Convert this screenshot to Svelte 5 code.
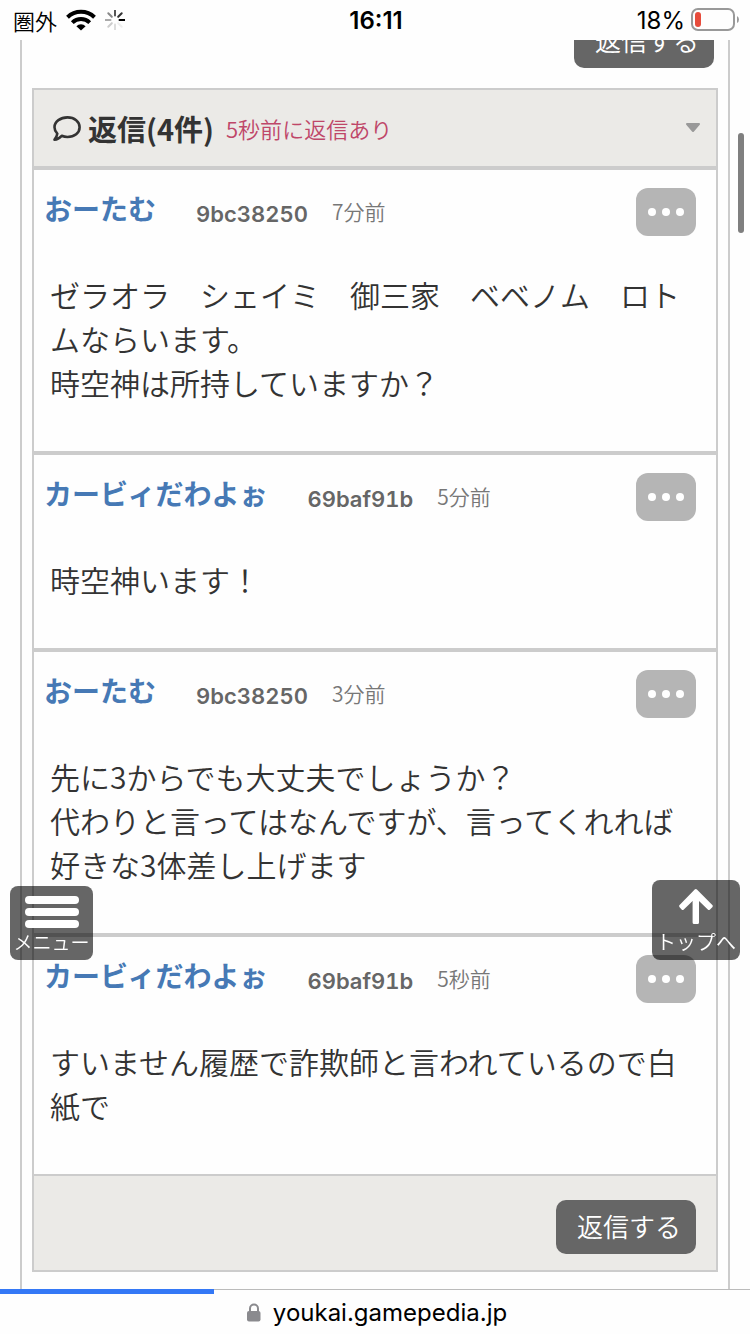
<script>
	let open = $state(true);

	const loaded = 28.5;

	const replies = [
		{
			name: "おーたむ",
			id: "9bc38250",
			time: "7分前",
			text: "ゼラオラ　シェイミ　御三家　ベベノム　ロトムならいます。\n時空神は所持していますか？",
		},
		{
			name: "カービィだわよぉ",
			id: "69baf91b",
			time: "5分前",
			text: "時空神います！",
		},
		{
			name: "おーたむ",
			id: "9bc38250",
			time: "3分前",
			text: "先に3からでも大丈夫でしょうか？\n代わりと言ってはなんですが、言ってくれれば好きな3体差し上げます",
		},
		{
			name: "カービィだわよぉ",
			id: "69baf91b",
			time: "5秒前",
			text: "すいません履歴で詐欺師と言われているので白紙で",
		},
	];

	// spinner spokes, clockwise from the top
	const spokes = ["#555", "#333", "#000", "#eee", "#ddd", "#ccc", "#aaa", "#888"];
</script>

<div class="status">
	<div class="carrier">
		<span>圏外</span>
		<svg class="wifi" viewBox="0 0 30 22" aria-hidden="true">
			<path d="M1.500 8.200a19.500 19.500 0 0 1 27 0" />
			<path d="M6.300 13.600a12.600 12.600 0 0 1 17.400 0" />
			<path class="dot" d="M15 21.500l-4.600-4.300a6.600 6.600 0 0 1 9.200 0z" />
		</svg>
		<svg class="spinner" viewBox="-10 -10 20 20" aria-hidden="true">
			{#each spokes as color, i}
				<path d="M0-4.500v-5" stroke={color} transform="rotate({i * 45})" />
			{/each}
		</svg>
	</div>
	<strong>16:11</strong>
	<div class="power">
		<span>18%</span>
		<svg class="battery" viewBox="0 0 48 24" aria-hidden="true">
			<rect class="case" x="1" y="1" width="42" height="21" rx="6" />
			<rect class="level" x="4" y="4" width="6" height="15" rx="3" />
			<path class="cap" d="M46 8q2 1 2 3.500t-2 3.500z" />
		</svg>
	</div>
</div>

<main>
	<div class="column">
		<div class="actions">
			<button class="reply-btn">返信する</button>
		</div>

		<section class="panel">
			<button class="head" aria-expanded={open} onclick={() => (open = !open)}>
				<svg class="bubble" viewBox="0 0 28 25" aria-hidden="true">
					<path
						d="M14.500 1.400C21.500 1.400 26.600 5.500 26.600 11.200S21.500 21 14.500 21c-2.200 0-4-.4-5.800-1.200C6.700 22 4.200 23.500 1.500 23.600c1.500-1.700 2.500-3.600 2.800-6C2.500 15.800 1.500 13.700 1.500 11.200 1.500 5.500 7.500 1.400 14.500 1.400z"
					/>
				</svg>
				<span class="title">返信(4件)</span>
				<span class="recent">5秒前に返信あり</span>
				<svg class="caret" viewBox="0 0 16 10" aria-hidden="true">
					<path d="M2 1h12L8 8z" />
				</svg>
			</button>

			{#if open}
				{#each replies as reply}
					<article>
						<header>
							<a href="#{reply.id}">{reply.name}</a>
							<span class="id">{reply.id}</span>
							<time>{reply.time}</time>
							<button class="more" aria-label="その他">
								<i></i><i></i><i></i>
							</button>
						</header>
						<p>{reply.text}</p>
					</article>
				{/each}
			{/if}

			<footer>
				<button class="reply-btn">返信する</button>
			</footer>
		</section>
	</div>
</main>

<div class="scroll-thumb"></div>

<button class="float menu">
	<svg viewBox="0 0 54 32" aria-hidden="true">
		<rect width="54" height="8" rx="4" />
		<rect y="12" width="54" height="8" rx="4" />
		<rect y="24" width="54" height="8" rx="4" />
	</svg>
	<span>メニュー</span>
</button>

<button class="float top">
	<svg viewBox="0 0 34 35" aria-hidden="true">
		<path
			d="M15.700.6q1.100-1 2.200 0L33.300 16q1 1.100 0 2.200L31 20.500q-1.100 1-2.200 0L20 12v21.500q0 1.500-1.500 1.500h-3.400q-1.500 0-1.500-1.500V12l-8.800 8.500q-1.100 1-2.200 0L.6 18.200q-1-1.100 0-2.200z"
		/>
	</svg>
	<span>トップへ</span>
</button>

<div class="browser">
	<div class="progress" style="width: {loaded}%"></div>
	<svg class="lock" viewBox="0 0 14 19" aria-hidden="true">
		<path d="M3 9V5.500a4 4 0 0 1 8 0V9" />
		<rect y="8" width="13.500" height="10.500" rx="2" />
	</svg>
	<span>youkai.gamepedia.jp</span>
</div>

<style>
	:global(body) {
		background: #fefefe;
		color: #333;
		font-family: "Noto Sans CJK JP", sans-serif;
		font-weight: 350;
	}

	button {
		border: 0;
		cursor: pointer;
		font-family: inherit;
		font-weight: inherit;
		margin: 0;
		padding: 0;
	}

	.status {
		align-items: center;
		background: #fefefe;
		box-sizing: border-box;
		color: #000;
		display: grid;
		font-family: Inter, "Noto Sans CJK JP", sans-serif;
		font-size: 24px;
		grid-template-columns: 1fr auto 1fr;
		height: 40px;
		left: 0;
		padding: 0 11px 0 13px;
		position: fixed;
		right: 0;
		top: 0;
		z-index: 2;
	}

	.status strong {
		font-weight: 600;
	}

	.carrier,
	.power {
		align-items: center;
		display: flex;
	}

	.carrier {
		font-size: 22px;
	}

	.power {
		font-weight: 400;
		gap: 6px;
		justify-content: flex-end;
	}

	.wifi {
		fill: none;
		height: 22px;
		margin: 0 9px;
		stroke: #000;
		stroke-width: 4;
		width: 30px;
	}

	.wifi .dot {
		fill: #000;
		stroke: none;
	}

	.spinner {
		height: 20px;
		stroke-linecap: round;
		stroke-width: 2;
		width: 20px;
	}

	.battery {
		height: 24px;
		width: 48px;
	}

	.case {
		fill: none;
		stroke: #999;
		stroke-width: 2;
	}

	.level {
		fill: #e74c3c;
	}

	.cap {
		fill: #999;
	}

	main {
		display: flex;
		flex-direction: column;
		min-height: 100vh;
		padding: 0 20px;
	}

	.column {
		border: solid #ccc;
		border-width: 0 2px;
		flex: 1;
		padding: 14px 10px 0;
	}

	.actions {
		display: flex;
		justify-content: flex-end;
		margin: 0 4px 20px;
	}

	.reply-btn {
		background: #666;
		border-radius: 10px;
		color: #fff;
		font-size: 26px;
		height: 54px;
		padding: 0 0 4px 6px;
		width: 140px;
	}

	.panel {
		border: 2px solid #ccc;
	}

	.head {
		align-items: center;
		background: #ebeae7;
		color: #333;
		display: flex;
		height: 76px;
		padding: 0 15px 0 19px;
		text-align: left;
		width: 100%;
	}

	.bubble {
		fill: none;
		height: 25px;
		stroke: #333;
		stroke-linejoin: round;
		stroke-width: 2.6;
		width: 28px;
	}

	.title {
		font-size: 29px;
		font-weight: bold;
		margin: 0 12px 0 7px;
	}

	.recent {
		color: #bf4769;
		font-size: 22px;
	}

	.caret {
		fill: #999;
		height: 10px;
		margin-left: auto;
		stroke: #999;
		stroke-linejoin: round;
		stroke-width: 2;
		width: 16px;
	}

	article {
		border-top: 4px solid #ccc;
		padding: 18px 16px 47px;
	}

	article header {
		display: flex;
		height: 48px;
		line-height: 46px;
		margin: 0 4px 36px -6px;
	}

	a {
		color: #4679b5;
		font-size: 28px;
		font-weight: bold;
		line-height: 40px;
		margin-right: 40px;
		text-decoration: none;
	}

	.id {
		color: #666;
		font-family: Inter, sans-serif;
		font-size: 22px;
		font-variant-numeric: tabular-nums;
		font-weight: 600;
		line-height: 52px;
		margin-right: 24px;
	}

	time {
		color: #777;
		font-size: 21px;
	}

	.more {
		align-items: center;
		background: #b5b5b5;
		border-radius: 12px;
		display: flex;
		gap: 6px;
		height: 48px;
		justify-content: center;
		margin-left: auto;
		width: 60px;
	}

	.more i {
		background: #fff;
		border-radius: 50%;
		height: 8px;
		width: 8px;
	}

	article p {
		font-size: 30px;
		line-height: 44px;
		margin: 0;
		white-space: pre-line;
	}

	footer {
		background: #ebeae7;
		border-top: 2px solid #ccc;
		display: flex;
		justify-content: flex-end;
		padding: 24px 20px 16px;
	}

	.scroll-thumb {
		background: #7f7f7f;
		border-radius: 3px;
		height: 100px;
		position: fixed;
		right: 6px;
		top: 133px;
		width: 6px;
		z-index: 1;
	}

	.float {
		align-items: center;
		background: rgba(0, 0, 0, 0.6);
		border-radius: 8px;
		bottom: 374px;
		color: #fff;
		display: flex;
		flex-direction: column;
		justify-content: space-between;
		position: fixed;
		z-index: 1;
	}

	.float svg {
		fill: #fff;
	}

	.float span {
		line-height: 20px;
		white-space: nowrap;
	}

	.menu {
		font-size: 19px;
		height: 74px;
		left: 10px;
		padding: 10px 0 8px;
		width: 83px;
	}

	.menu svg {
		height: 32px;
		width: 54px;
	}

	.top {
		font-size: 20px;
		height: 80px;
		padding: 9px 0 8px;
		right: 10px;
		width: 88px;
	}

	.top svg {
		height: 35px;
		width: 34px;
	}

	.browser {
		align-items: center;
		background: #fefefe;
		border-top: 1px solid #bbb;
		bottom: 0;
		box-sizing: border-box;
		color: #000;
		display: flex;
		font-family: Inter, sans-serif;
		font-size: 24px;
		font-weight: 400;
		gap: 12px;
		height: 45px;
		justify-content: center;
		left: 0;
		padding-left: 4px;
		position: fixed;
		right: 0;
		z-index: 2;
	}

	.progress {
		background: #3478f6;
		height: 5px;
		left: 0;
		position: absolute;
		top: -1px;
	}

	.lock {
		height: 19px;
		width: 14px;
	}

	.lock path {
		fill: none;
		stroke: #8a8a8e;
		stroke-width: 2;
	}

	.lock rect {
		fill: #8a8a8e;
	}
</style>
